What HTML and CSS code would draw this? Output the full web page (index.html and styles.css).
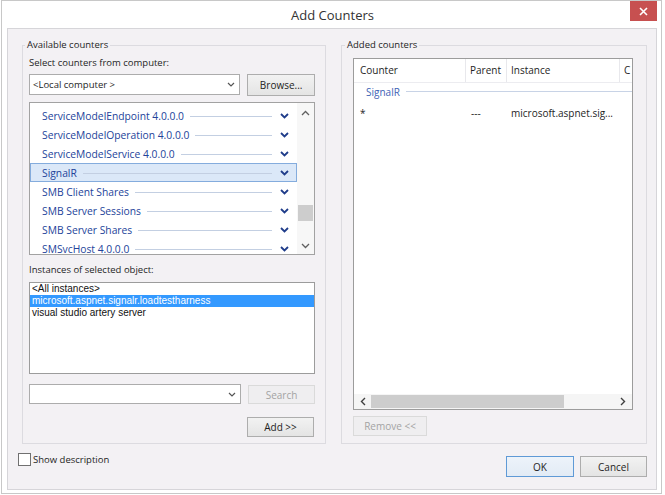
FILE: index.html
```html
<!DOCTYPE html>
<html>
<head>
<meta charset="utf-8">
<link rel="stylesheet" href="styles.css">
</head>
<body>
<div class="window">
  <div class="titlebar">
    <span class="title">Add Counters</span>
    <div class="close"><svg width="9" height="9" viewBox="0 0 9 9"><path d="M1 1L8 8M8 1L1 8" stroke="#fff" stroke-width="1.6"/></svg></div>
  </div>
  <div class="client">
    <div class="groups">
      <fieldset class="group left">
        <legend>Available counters</legend>
        <div class="label l1">Select counters from computer:</div>
        <div class="row r1">
          <div class="combo"><span>&lt;Local computer &gt;</span><svg class="cv" width="8" height="5" viewBox="0 0 8 5"><path d="M1 1l3 3 3-3" stroke="#555" stroke-width="1.2" fill="none"/></svg></div>
          <button class="btn browse">Browse...</button>
        </div>
        <div class="counters">
          <div class="items">
            <div class="item"><span>ServiceModelEndpoint 4.0.0.0</span><i class="rule"></i><svg class="chev" width="9" height="6" viewBox="0 0 9 6"><path d="M1 1l3.5 3.5L8 1" stroke="#1f3c8a" stroke-width="1.8" fill="none"/></svg></div>
            <div class="item"><span>ServiceModelOperation 4.0.0.0</span><i class="rule"></i><svg class="chev" width="9" height="6" viewBox="0 0 9 6"><path d="M1 1l3.5 3.5L8 1" stroke="#1f3c8a" stroke-width="1.8" fill="none"/></svg></div>
            <div class="item"><span>ServiceModelService 4.0.0.0</span><i class="rule"></i><svg class="chev" width="9" height="6" viewBox="0 0 9 6"><path d="M1 1l3.5 3.5L8 1" stroke="#1f3c8a" stroke-width="1.8" fill="none"/></svg></div>
            <div class="item sel"><span>SignalR</span><i class="rule"></i><svg class="chev" width="9" height="6" viewBox="0 0 9 6"><path d="M1 1l3.5 3.5L8 1" stroke="#1f3c8a" stroke-width="1.8" fill="none"/></svg></div>
            <div class="item"><span>SMB Client Shares</span><i class="rule"></i><svg class="chev" width="9" height="6" viewBox="0 0 9 6"><path d="M1 1l3.5 3.5L8 1" stroke="#1f3c8a" stroke-width="1.8" fill="none"/></svg></div>
            <div class="item"><span>SMB Server Sessions</span><i class="rule"></i><svg class="chev" width="9" height="6" viewBox="0 0 9 6"><path d="M1 1l3.5 3.5L8 1" stroke="#1f3c8a" stroke-width="1.8" fill="none"/></svg></div>
            <div class="item"><span>SMB Server Shares</span><i class="rule"></i><svg class="chev" width="9" height="6" viewBox="0 0 9 6"><path d="M1 1l3.5 3.5L8 1" stroke="#1f3c8a" stroke-width="1.8" fill="none"/></svg></div>
            <div class="item"><span>SMSvcHost 4.0.0.0</span><i class="rule"></i><svg class="chev" width="9" height="6" viewBox="0 0 9 6"><path d="M1 1l3.5 3.5L8 1" stroke="#1f3c8a" stroke-width="1.8" fill="none"/></svg></div>
          </div>
          <div class="vscroll">
            <svg width="9" height="6" viewBox="0 0 9 6"><path d="M1 5l3.5-3.5L8 5" stroke="#606060" stroke-width="1.3" fill="none"/></svg>
            <div class="vtrack"><div class="vthumb"></div></div>
            <svg width="9" height="6" viewBox="0 0 9 6"><path d="M1 1l3.5 3.5L8 1" stroke="#606060" stroke-width="1.3" fill="none"/></svg>
          </div>
        </div>
        <div class="label l2">Instances of selected object:</div>
        <div class="instances">
          <div class="inst">&lt;All instances&gt;</div>
          <div class="inst on">microsoft.aspnet.signalr.loadtestharness</div>
          <div class="inst">visual studio artery server</div>
        </div>
        <div class="row r3">
          <div class="combo small"><span></span><svg class="cv" width="8" height="5" viewBox="0 0 8 5"><path d="M1 1l3 3 3-3" stroke="#555" stroke-width="1.2" fill="none"/></svg></div>
          <button class="btn off search">Search</button>
        </div>
        <div class="row r4">
          <button class="btn add">Add &gt;&gt;</button>
        </div>
      </fieldset>
      <fieldset class="group right">
        <legend>Added counters</legend>
        <div class="added">
          <div class="thead">
            <div class="c c1">Counter</div>
            <div class="c c2">Parent</div>
            <div class="c c3">Instance</div>
            <div class="c c4">C</div>
          </div>
          <div class="grp"><span>SignalR</span><i class="grule"></i></div>
          <div class="trow">
            <div class="c c1">*</div>
            <div class="c c2">---</div>
            <div class="c c3">microsoft.aspnet.sig...</div>
          </div>
          <div class="fill"></div>
          <div class="hscroll">
            <svg width="6" height="9" viewBox="0 0 6 9"><path d="M5 1L1.5 4.5 5 8" stroke="#404040" stroke-width="1.4" fill="none"/></svg>
            <div class="htrack"><div class="hthumb"></div></div>
            <svg width="6" height="9" viewBox="0 0 6 9"><path d="M1 1l3.5 3.5L1 8" stroke="#404040" stroke-width="1.4" fill="none"/></svg>
          </div>
        </div>
        <div class="row r5">
          <button class="btn off remove">Remove &lt;&lt;</button>
        </div>
      </fieldset>
    </div>
    <div class="footer">
      <label class="check"><span class="box"></span><span>Show description</span></label>
      <span class="spacer"></span>
      <button class="btn ok">OK</button>
      <button class="btn cancel">Cancel</button>
    </div>
  </div>
</div>
</body>
</html>
```
FILE: styles.css
```css
* { box-sizing: border-box; }
html, body { margin: 0; padding: 0; background: #fff; }
body { font-family: "Open Sans", "Noto Sans", sans-serif; font-size: 9.5px; color: #1e1e1e; }

.window {
  margin-left: 1px;
  width: 661px;
  height: 494px;
  border: 1px solid #c8c8c8;
  background: #fff;
  display: flex;
  flex-direction: column;
}
.titlebar {
  height: 27px;
  flex: none;
  display: grid;
  grid-template-columns: 1fr auto 1fr;
  align-items: center;
}
.title { grid-column: 2; font-size: 13px; color: #333; margin-left: 2px; }
.close {
  grid-column: 3;
  justify-self: end;
  align-self: start;
  width: 27px;
  height: 20px;
  margin-right: 4px;
  background: #c75050;
  display: flex;
  align-items: center;
  justify-content: center;
}

.client {
  flex: 1;
  margin: 0 4px 3px 5px;
  border: 1px solid #d6d5d9;
  background: #f3f1f4;
  display: flex;
  flex-direction: column;
}
.groups { display: flex; gap: 15px; padding: 9px 0 0 14px; }
fieldset.group {
  margin: 0;
  min-width: 0;
  height: 406px;
  border: 1px solid #dcdbe0;
  display: flex;
  flex-direction: column;
}
fieldset.left { width: 304px; padding: 0 10px 6px 6px; }
fieldset.right { width: 306px; padding: 0 13px 6px 11px; }
legend { padding: 0 2px; line-height: 14px; font-size: 9.5px; color: #1e1e1e; }
fieldset.left legend { margin-left: -4px; }
fieldset.right legend { margin-left: -8px; }

.label { line-height: 14px; }
.l1 { margin-top: 4px; }
.l2 { margin-top: 8px; }
.row { display: flex; gap: 7px; align-items: flex-start; }
.r1 { margin-top: 4px; }
.r3 { margin-top: 10px; }
.r4 { margin-top: 13px; justify-content: flex-end; padding-right: 1px; }
.r5 { margin-top: 6px; }

.combo {
  width: 212px;
  height: 21px;
  border: 1px solid #acacac;
  background: #fff;
  display: flex;
  align-items: center;
  justify-content: space-between;
  padding: 0 4px 0 3px;
}
.combo.small { height: 20px; }

.btn {
  font-family: inherit;
  font-size: 10px;
  color: #1e1e1e;
  height: 22px;
  padding: 0;
  border: 1px solid #adadad;
  background: linear-gradient(#f2f2f2, #e4e4e4);
}
.browse { width: 68px; }
.search { width: 67px; height: 19px; margin-top: 1px; }
.add { width: 67px; height: 20px; }
.remove { width: 74px; height: 20px; }
.btn.off { color: #a3a3a3; border-color: #dadada; background: #efeef0; }

.counters {
  margin-top: 6px;
  width: 286px;
  height: 154px;
  border: 1px solid #a2a2a2;
  background: #fff;
  display: flex;
  overflow: hidden;
}
.items { flex: 1; padding-top: 3px; min-width: 0; }
.item {
  height: 19px;
  display: flex;
  align-items: center;
  padding: 0 7px 0 11px;
  border: 1px solid transparent;
  font-size: 10.3px;
  color: #23439a;
  white-space: nowrap;
}
.item.sel { background: #dbe8f8; border-color: #84acdd; }
.rule { flex: 1; height: 1px; background: #c3cfe2; margin: 1px 8px 0 6px; }
.chev { flex: none; }
.vscroll {
  width: 17px;
  flex: none;
  background: #f7f7f7;
  display: flex;
  flex-direction: column;
  align-items: center;
  padding: 7px 0 5px;
}
.vtrack { flex: 1; width: 100%; padding: 89px 1px 0 1px; }
.vthumb { height: 16px; background: #cdcdcd; }

.instances {
  margin-top: 5px;
  width: 286px;
  height: 92px;
  border: 1px solid #9c9c9c;
  background: #fff;
  font-family: "Liberation Sans", Arial, sans-serif;
  font-size: 10px;
  color: #111;
}
.inst { height: 12px; line-height: 12px; padding-left: 2px; white-space: nowrap; }
.inst.on { background: #3399ff; color: #fff; }

.added {
  margin-top: 6px;
  width: 280px;
  height: 352px;
  border: 1px solid #9c9c9c;
  background: #fff;
  display: flex;
  flex-direction: column;
  overflow: hidden;
}
.thead { display: flex; height: 24px; border-bottom: 1px solid #ececf0; flex: none; }
.thead .c { line-height: 22px; }
.c { white-space: nowrap; overflow: hidden; flex: none; color: #1e1e1e; font-size: 10px; }
.thead .c1, .thead .c2, .thead .c3 { border-right: 1px solid #e8e8ec; }
.c1 { width: 112px; padding-left: 6px; }
.c2 { width: 41px; padding-left: 4px; }
.c3 { width: 113px; padding-left: 4px; }
.c4 { flex: 1; padding-left: 4px; }
.trow .c2 { padding-left: 5px; }
.grp { height: 17px; display: flex; align-items: center; padding-left: 12px; flex: none; }
.grp span { color: #3e63b5; font-size: 10px; }
.grule { flex: 1; height: 1px; background: #c8d3e6; margin-left: 6px; }
.trow { display: flex; height: 20px; align-items: center; margin-top: 3px; flex: none; }
.fill { flex: 1; }
.hscroll {
  height: 15px;
  flex: none;
  background: #f5f5f5;
  display: flex;
  align-items: center;
  padding: 0 6px 0 6px;
}
.htrack { flex: 1; height: 100%; padding: 1px 56px 1px 5px; }
.hthumb { height: 100%; background: #cdcdcd; }

.footer { flex: 1; display: flex; align-items: flex-start; padding: 0 9px 0 10px; }
.check { margin-top: 9px; display: flex; align-items: center; gap: 2px; font-size: 9.5px; }
.box { width: 13px; height: 13px; border: 1px solid #707070; background: #fff; }
.spacer { flex: 1; }
.ok, .cancel { margin-top: 12px; height: 21px; }
.ok { width: 68px; margin-right: 6px; border-color: #5f9ad6; background: linear-gradient(#edf3fa, #e2ebf5); }
.cancel { width: 67px; }
```
